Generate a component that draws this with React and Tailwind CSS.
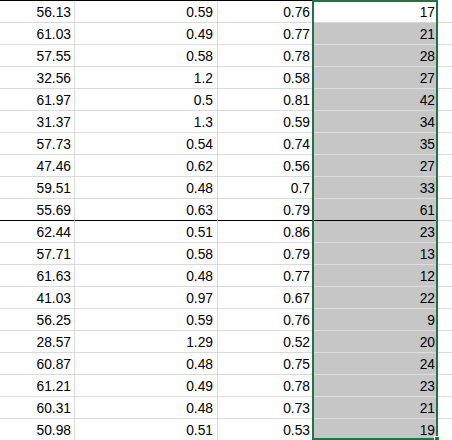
const colA = ['56.13', '61.03', '57.55', '32.56', '61.97', '31.37', '57.73', '47.46', '59.51', '55.69', '62.44', '57.71', '61.63', '41.03', '56.25', '28.57', '60.87', '61.21', '60.31', '50.98'];
const colB = ['0.59', '0.49', '0.58', '1.2', '0.5', '1.3', '0.54', '0.62', '0.48', '0.63', '0.51', '0.58', '0.48', '0.97', '0.59', '1.29', '0.48', '0.49', '0.48', '0.51'];
const colC = ['0.76', '0.77', '0.78', '0.58', '0.81', '0.59', '0.74', '0.56', '0.7', '0.79', '0.86', '0.79', '0.77', '0.67', '0.76', '0.52', '0.75', '0.78', '0.73', '0.53'];
const colD = ['17', '21', '28', '27', '42', '34', '35', '27', '33', '61', '23', '13', '12', '22', '9', '20', '24', '23', '21', '19'];

const App = () => {
  return (
    <div
      className="relative h-[440px] w-[452px] overflow-hidden bg-white text-[13.8px] leading-none text-black"
      style={{ fontFamily: '"Liberation Sans", Arial, sans-serif' }}
    >
      <div className="flex h-px">
        <div className="w-[437px] bg-black" />
      </div>

      {colA.map((a, i) => {
        const thick = i === 9;
        const line = thick ? 'border-b-black' : 'border-b-[#d9d9d9]';
        const selLine = thick ? 'border-b-black' : 'border-b-[#dedede]';
        return (
          <div key={i} className="flex h-[22px]">
            <div className={`flex w-[75px] items-end justify-end border-b border-r border-r-[#d9d9d9] pb-[2px] pr-[3px] ${line}`}>{a}</div>
            <div className={`flex w-[143px] items-end justify-end border-b border-r border-r-[#d9d9d9] pb-[2px] pr-[4px] ${line}`}>{colB[i]}</div>
            <div className={`flex w-[95px] items-end justify-end border-b border-r border-r-[#d9d9d9] pb-[2px] pr-[2px] ${line}`}>{colC[i]}</div>
            <div className={`flex w-[124px] items-end justify-end border-b pb-[2px] pr-[2px] ${i === 0 ? 'bg-white border-b-[#d9d9d9]' : `bg-[#c6c6c6] ${selLine}`}`}>{colD[i]}</div>
            <div className="flex-1 border-b border-b-[#d9d9d9]" />
          </div>
        );
      })}

      <div className="absolute left-[312px] top-0 h-[440px] w-[126px] border-2 border-[#217346]" />
      <div className="absolute left-[434px] top-[436px] h-[6px] w-[6px] border border-white bg-[#217346]" />
    </div>
  );
};

export default App;
